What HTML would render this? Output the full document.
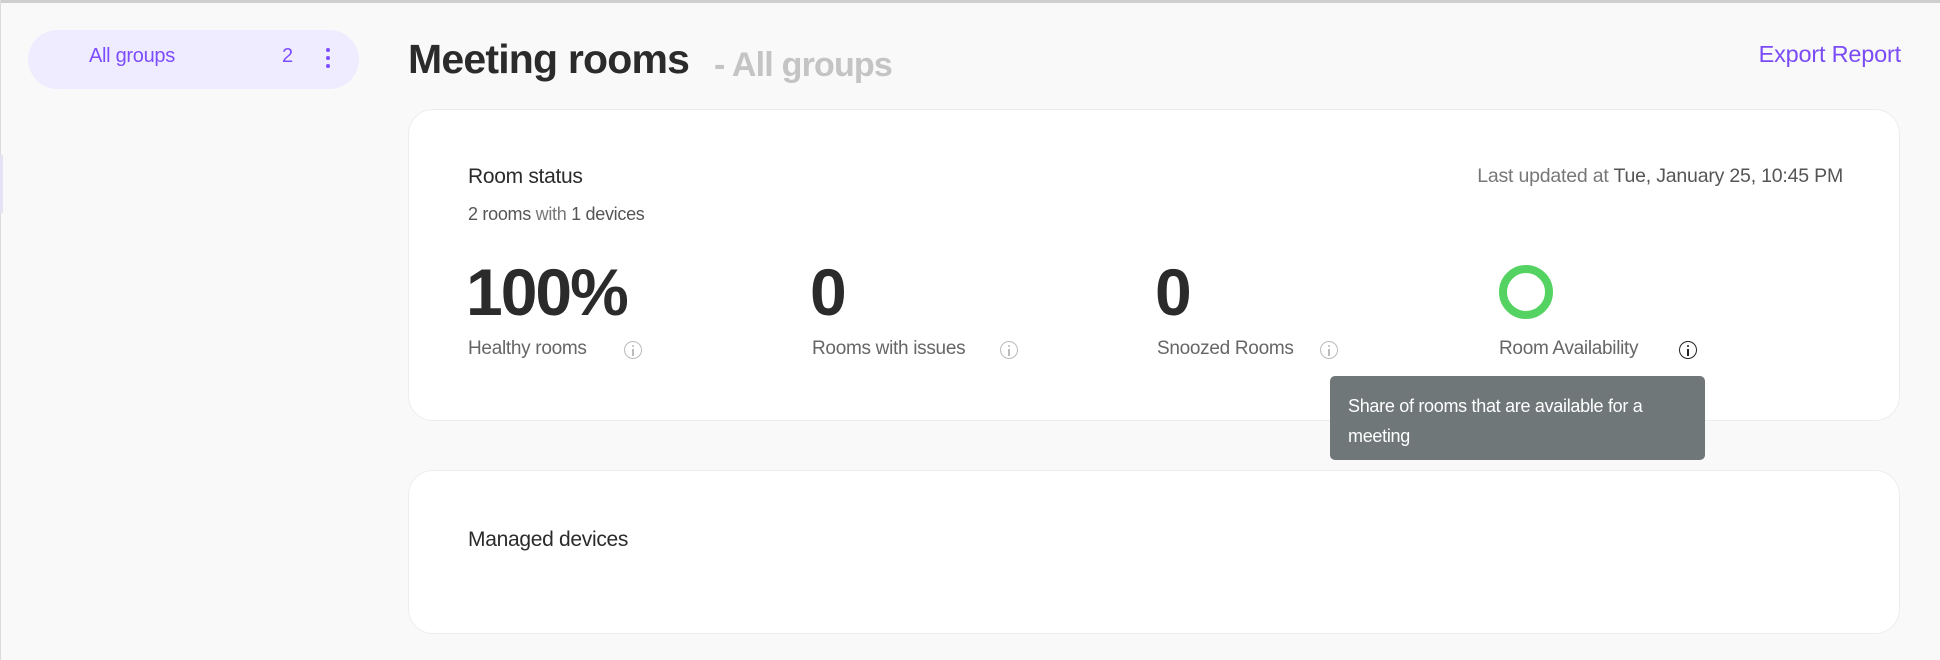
<!DOCTYPE html>
<html><head><meta charset="utf-8"><style>
*{margin:0;padding:0;box-sizing:border-box}
body{width:1940px;height:660px;background:#f9f9f9;font-family:"Liberation Sans",sans-serif;position:relative;overflow:hidden;color:#2b2b2b}
.a{position:absolute;white-space:nowrap}
.card{position:absolute;background:#fff;border:1px solid #ededed;border-radius:25px;left:408px;width:1492px}
.lab{font-size:19px;color:#666;letter-spacing:-0.3px;top:338px}
.big{font-size:66px;font-weight:bold;color:#2b2b2b;top:254px;letter-spacing:-2px}
.info{position:absolute;width:18px;height:18px;border:1.5px solid #bbb;border-radius:50%;top:341px}
.info:before{content:"";position:absolute;left:6.8px;top:3px;width:2.2px;height:2.2px;background:#bbb;border-radius:1px}
.info:after{content:"";position:absolute;left:7px;top:6.5px;width:1.8px;height:7px;background:#bbb}
.info.dk{border-color:#222}
.info.dk:before,.info.dk:after{background:#222}
</style></head><body>
<div class="a" style="left:0;top:0;width:1940px;height:3px;background:#cfcfcf"></div>
<div class="a" style="left:0;top:0;width:1px;height:660px;background:#dcdcdc"></div>
<div class="a" style="left:0;top:155px;width:3px;height:58px;background:#e6e2f6"></div>
<div class="a" style="left:28px;top:30px;width:331px;height:59px;background:#f0ecff;border-radius:30px"></div>
<div class="a" style="left:89px;top:45px;font-size:20px;color:#7c4dff;letter-spacing:-0.3px">All groups</div>
<div class="a" style="left:282px;top:45px;font-size:20px;color:#7c4dff">2</div>
<div class="a" style="left:326px;top:48px;width:4px;height:4px;border-radius:2px;background:#7c4dff;box-shadow:0 8px 0 #7c4dff,0 16px 0 #7c4dff"></div>
<div class="a" style="left:408px;top:36px;font-size:41px;font-weight:bold;color:#2b2b2b;letter-spacing:-0.8px">Meeting rooms</div>
<div class="a" style="left:714px;top:46px;font-size:34px;font-weight:bold;color:#c4c4c4;letter-spacing:-0.8px">- All groups</div>
<div class="a" style="right:39px;top:41px;font-size:23.5px;color:#7b4cf6;letter-spacing:-0.2px">Export Report</div>

<div class="card" style="top:109px;height:312px"></div>
<div class="a" style="left:468px;top:165px;font-size:21px;letter-spacing:-0.3px">Room status</div>
<div class="a" style="left:468px;top:204px;font-size:18px;color:#777;letter-spacing:-0.3px"><span style="color:#555">2 rooms</span> with <span style="color:#555">1 devices</span></div>
<div class="a" style="right:97px;top:165px;font-size:19.5px;color:#777;letter-spacing:-0.2px">Last updated at <span style="color:#555">Tue, January 25, 10:45 PM</span></div>
<div class="a big" style="left:466px">100%</div>
<div class="a big" style="left:810px">0</div>
<div class="a big" style="left:1155px">0</div>
<div class="a" style="left:1499px;top:265px;width:54px;height:54px;border:8px solid #55d362;border-radius:50%"></div>
<div class="a lab" style="left:468px">Healthy rooms</div>
<div class="a lab" style="left:812px">Rooms with issues</div>
<div class="a lab" style="left:1157px">Snoozed Rooms</div>
<div class="a lab" style="left:1499px">Room Availability</div>
<div class="info" style="left:624px"></div>
<div class="info" style="left:1000px"></div>
<div class="info" style="left:1320px"></div>
<div class="info dk" style="left:1679px"></div>
<div class="a" style="left:1330px;top:376px;width:375px;height:84px;background:#6f7778;border-radius:5px"></div>
<div class="a" style="left:1348px;top:391px;font-size:18px;color:#fff;line-height:30px;letter-spacing:-0.3px">Share of rooms that are available for a<br>meeting</div>

<div class="card" style="top:470px;height:164px"></div>
<div class="a" style="left:468px;top:528px;font-size:21px;letter-spacing:-0.3px">Managed devices</div>
</body></html>
